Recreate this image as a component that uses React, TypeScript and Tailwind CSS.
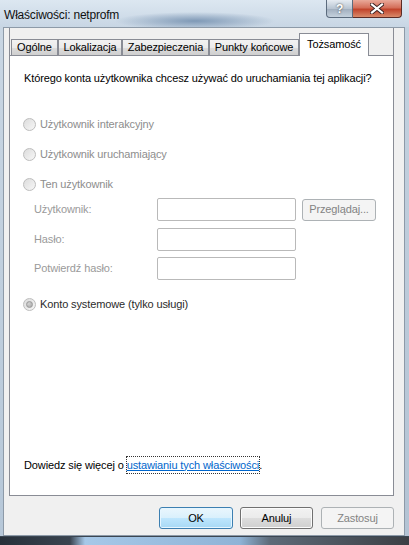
import React from "react";

const font = "font-['Liberation_Sans',Arial,sans-serif] text-[11px] tracking-[-0.12px]";

function Radio({ checked }: { checked?: boolean }) {
  return (
    <span className="flex h-[13px] w-[13px] shrink-0 items-center justify-center rounded-full border border-[#bdbdbd] bg-[linear-gradient(135deg,#dcdcdc,#f7f7f7)]">
      {checked && (
        <span className="h-[7px] w-[7px] rounded-full border border-[#9a9a9a] bg-[radial-gradient(circle_at_35%_35%,#d4d4d4,#a3a3a3)]" />
      )}
    </span>
  );
}

function RadioRow({ label, checked, dark, className }: { label: string; checked?: boolean; dark?: boolean; className?: string }) {
  return (
    <div className={`flex h-[20px] items-center gap-[4px] ${className ?? ""}`}>
      <Radio checked={checked} />
      <span className={dark ? "text-[#2b2b2b]" : "text-[#8d8d8d]"}>{label}</span>
    </div>
  );
}

function Field({ label, className, children }: { label: string; className?: string; children?: React.ReactNode }) {
  return (
    <div className={`flex h-[23px] items-center ${className ?? ""}`}>
      <span className="w-[123px] text-[#9a9a9a]">{label}</span>
      <div className="h-[23px] w-[139px] rounded-[2px] border border-[#b9b9b9] bg-white" />
      {children}
    </div>
  );
}

function Tab({ label, width }: { label: string; width: string }) {
  return (
    <div className={`flex h-[16px] items-center justify-center border-x border-t border-[#898c95] bg-[linear-gradient(#f2f2f2,#ebebeb_50%,#dddddd_51%,#cfcfcf)] text-black ${width}`}>
      {label}
    </div>
  );
}

export default function App() {
  return (
    <div className={`flex h-[545px] w-[409px] flex-col overflow-hidden bg-[#bfcedd] ${font}`}>
      {/* title bar */}
      <div className="flex h-[27px] items-start bg-[image:radial-gradient(ellipse_80px_9px_at_195px_21px,#7f99b6,transparent),linear-gradient(#dce7f1,#c8d6e4)]">
        <span className="mt-[6px] pl-[4px] text-[12px] tracking-[-0.2px] text-[#111]">Właściwości: netprofm</span>
        <div className="ml-auto mr-[7px] flex h-[18px]">
          <div className="flex w-[27px] items-center justify-center rounded-bl-[4px] border border-t-0 border-[#5b6b7d] bg-[linear-gradient(#e6ecf2,#b9c5d2_50%,#9fadbd_51%,#c5d1dd)] text-[12px] font-bold text-white [text-shadow:0_0_2px_#333]">
            ?
          </div>
          <div className="flex w-[49px] items-center justify-center rounded-br-[4px] border border-l-0 border-t-0 border-[#5b2b25] bg-[linear-gradient(#e9a99a,#d46f5a_45%,#c1442c_55%,#d98a6a)]">
            <svg width="14" height="11" viewBox="0 0 14 11">
              <path d="M2 1.5 L12 9.5 M12 1.5 L2 9.5" stroke="#3a2020" strokeWidth="4" strokeLinecap="square" />
              <path d="M2 1.5 L12 9.5 M12 1.5 L2 9.5" stroke="#ffffff" strokeWidth="2.2" strokeLinecap="square" />
            </svg>
          </div>
        </div>
      </div>

      <div className="flex h-[509px]">
        <div className="w-[3px] bg-[linear-gradient(#c9d6e3,#b6c7d8)]" />
        {/* client area */}
        <div className="flex w-[402px] flex-col border border-[#8d9aa8] bg-[#f0f0f0]">
          <div className="ml-[5px] flex h-[468px] w-[385px] flex-col border-x border-b border-[#898c95]">
            <div className="flex h-[27px] items-end pl-[1px]">
              <Tab label="Ogólne" width="w-[47px]" />
              <Tab label="Lokalizacja" width="w-[64px]" />
              <Tab label="Zabezpieczenia" width="w-[87px]" />
              <Tab label="Punkty końcowe" width="w-[90px]" />
              <div className="relative z-10 -mb-px flex h-[23px] w-[70px] items-center justify-center border-x border-t border-[#898c95] bg-white pb-[2px] text-black">
                Tożsamość
              </div>
            </div>
            <div className="flex flex-1 flex-col border-t border-[#898c95] bg-white pb-[22px] pl-[13px]">
              <div className="ml-[1px] mt-[14px] flex h-[16px] items-center text-black">
                Którego konta użytkownika chcesz używać do uruchamiania tej aplikacji?
              </div>
              <RadioRow className="mt-[28px]" label="Użytkownik interakcyjny" />
              <RadioRow className="mt-[10px]" label="Użytkownik uruchamiający" />
              <RadioRow className="mt-[10px]" label="Ten użytkownik" />
              <div className="ml-[11px] flex flex-col">
                <Field label="Użytkownik:" className="mt-[4px]">
                  <div className="ml-[6px] flex h-[22px] w-[74px] items-center justify-center rounded-[3px] border border-[#adb2b5] bg-[#f4f4f4] text-[#838383]">
                    Przeglądaj...
                  </div>
                </Field>
                <Field label="Hasło:" className="mt-[7px]" />
                <Field label="Potwierdź hasło:" className="mt-[6px]" />
              </div>
              <RadioRow className="mt-[14px]" label="Konto systemowe (tylko usługi)" checked dark />
              <div className="ml-[1px] mt-auto flex h-[16px] items-center text-black">
                <span>Dowiedz się więcej o&nbsp;</span>
                <span className="outline-1 outline-dotted outline-[#333] text-[#0066cc] underline">ustawianiu tych właściwości</span>
                <span>.</span>
              </div>
            </div>
          </div>
          {/* buttons */}
          <div className="mr-[10px] mt-[11px] flex h-[22px] justify-end">
            <div className="flex w-[74px] items-center justify-center rounded-[3px] border border-[#3c7fb1] bg-[linear-gradient(#eaf6fd,#d9f0fc_50%,#bee6fd_51%,#a7d9f5)] text-black shadow-[inset_0_0_0_1px_#e6f6ff]">
              OK
            </div>
            <div className="ml-[7px] flex w-[73px] items-center justify-center rounded-[3px] border border-[#707070] bg-[linear-gradient(#f2f2f2,#ebebeb_50%,#dddddd_51%,#cfcfcf)] text-black shadow-[inset_0_0_0_1px_#fbfbfb]">
              Anuluj
            </div>
            <div className="ml-[8px] flex w-[73px] items-center justify-center rounded-[3px] border border-[#adb2b5] bg-[#f4f4f4] text-[#838383]">
              Zastosuj
            </div>
          </div>
        </div>
        <div className="w-[4px] bg-[linear-gradient(#c4d2e0,#b3c3d4)]" />
      </div>

      {/* bottom frame / desktop */}
      <div className="h-[9px] border-t border-[#3b4652] bg-[linear-gradient(90deg,#27303a_0px,#39434f_70px,#a6c8e8_85px,#8fb3d6_240px,#5d6a78_270px,#3c3f44_409px)]" />
    </div>
  );
}
